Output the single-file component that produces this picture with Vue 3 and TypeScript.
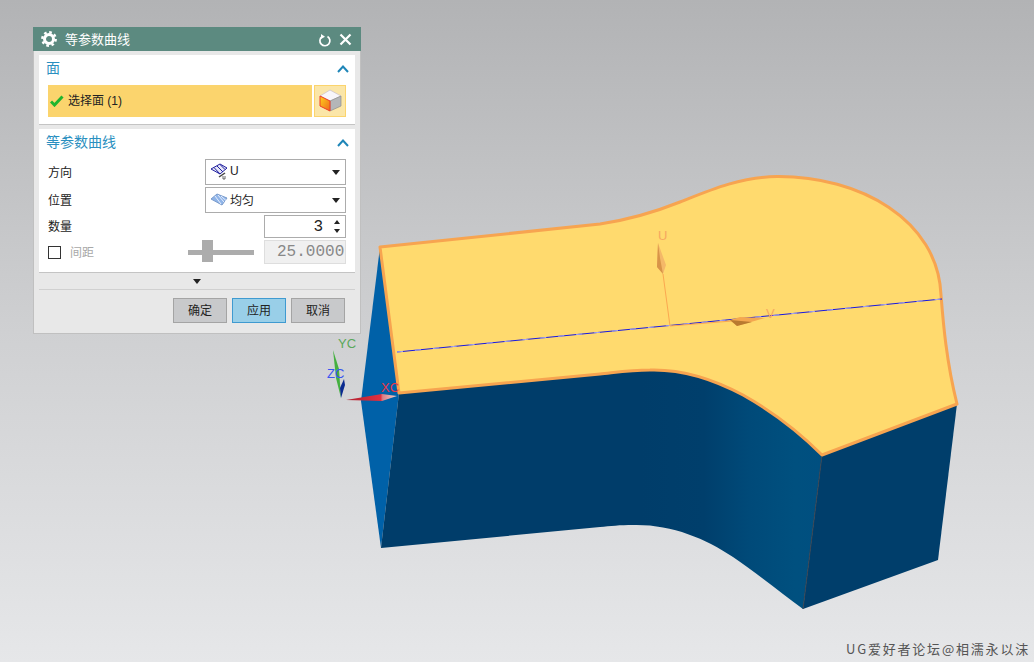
<script setup lang="ts">
interface DialogRow {
  label: string
  value: string
  icon: 'dir' | 'even'
}

const rows: DialogRow[] = [
  { label: '方向', value: 'U', icon: 'dir' },
  { label: '位置', value: '均匀', icon: 'even' },
]

const buttons = ['确定', '应用', '取消']

// outline of the top face, reused for the fill and the orange edge
const topFace =
  'M380 247 L600 224 C620 221 650 214 680 202 C710 190 740 177 777 176.500 C860 176 938 220 941 295 C943 320 946 360 957 404 L822 455 C800 433 775 413 743 395 C715 380 685 369 650 370 C630 370 615 372.500 600 374 L399 393 Z'
</script>

<template>
  <div class="viewport">
    <!-- 3D model on the graphics canvas -->
    <svg class="scene" width="1034" height="662" viewBox="0 0 1034 662">
      <defs>
        <linearGradient id="frontShade" x1="640" y1="0" x2="822" y2="0" gradientUnits="userSpaceOnUse">
          <stop offset="0" stop-color="#003d6a" />
          <stop offset="0.35" stop-color="#003f6c" />
          <stop offset="0.6" stop-color="#004a79" />
          <stop offset="0.85" stop-color="#00507f" />
          <stop offset="1" stop-color="#004f80" />
        </linearGradient>
        <linearGradient id="xArrow" x1="346" y1="0" x2="397" y2="0" gradientUnits="userSpaceOnUse">
          <stop offset="0" stop-color="#b02030" />
          <stop offset="0.68" stop-color="#e03040" />
          <stop offset="0.72" stop-color="#d88088" />
          <stop offset="1" stop-color="#f4d0c8" />
        </linearGradient>
      </defs>
      <path d="M380 247 L361 401 L381 548 L399 393 Z" fill="#0061a8" />
      <path
        d="M399 393 L600 374 C615 372.500 630 370 650 370 C685 369 715 380 743 395 C775 413 800 433 822 455 L803 609 C780 592 755 572 733 557 C705 538 670 524 633 525 C620 525 610 526 600 527 L381 548 Z"
        fill="url(#frontShade)"
      />
      <path d="M822 455 L957 404 L938 560 L803 609 Z" fill="#003e6b" />
      <path d="M822 455 L803 609" stroke="#3a4552" stroke-width="1" />
      <path :d="topFace" fill="#ffda6e" />
      <path :d="topFace" fill="none" stroke="#f7a450" stroke-width="3" stroke-linejoin="round" />
      <path d="M397 352 L942 299" stroke="#1818e0" stroke-width="1" fill="none" />
      <path d="M397 352 L942 299" stroke="#a8a8f0" stroke-width="1" stroke-dasharray="6 12" fill="none" />

      <!-- U / V handles -->
      <path d="M663 274 L670 326 L732 321" fill="none" stroke="#fba850" stroke-width="1" />
      <path d="M658 243 L666 265 L663 274 L657 267 Z" fill="#f4b868" />
      <path d="M658 243 L657 267 L663 274 L660 258 Z" fill="#d89448" />
      <path d="M730 320 L740 317 L765 318 L737 326 Z" fill="#f4a850" />
      <path d="M730 320 L737 326 L752 322 Z" fill="#b87a30" />
      <text x="658" y="240" class="axis axis-uv">U</text>
      <text x="766" y="318" class="axis axis-uv">V</text>

      <!-- WCS triad -->
      <path d="M333 350 L339 369 L341 398 L336 378 Z" fill="#44b040" />
      <path d="M341 398 L340 388 L344 379 L345 385 Z" fill="#0a2a90" />
      <path d="M346 400 L382 394 L397 396 L382 401 Z" fill="url(#xArrow)" />
      <text x="338" y="348" class="axis axis-y">YC</text>
      <text x="327" y="378" class="axis axis-z">ZC</text>
      <text x="381" y="392" class="axis axis-x">XC</text>
    </svg>

    <section class="dialog">
      <header class="titlebar">
        <svg class="gear" width="16" height="16" viewBox="0 0 16 16">
          <circle cx="8" cy="8" r="4.500" fill="none" stroke="#fff" stroke-width="3" />
          <circle cx="8" cy="8" r="6.700" fill="none" stroke="#fff" stroke-width="2.400" stroke-dasharray="2.630 2.630" />
        </svg>
        <span class="title">等参数曲线</span>
        <svg class="reset" width="14" height="14" viewBox="0 0 14 14">
          <path d="M9.500 2.500A5 5 0 1 1 4 2.700" fill="none" stroke="#fff" stroke-width="1.700" />
          <path d="M3 0l4 2.700-4 2.300z" fill="#fff" />
        </svg>
        <svg class="close" width="13" height="13" viewBox="0 0 13 13">
          <path d="M1.500 1.500l10 10M11.500 1.500l-10 10" stroke="#fff" stroke-width="2.200" />
        </svg>
      </header>

      <div class="content">
        <div class="group">
          <div class="group-head">
            <span>面</span>
            <svg class="chev" width="12" height="8" viewBox="0 0 12 8">
              <path d="M1 7l5-5.500L11 7" fill="none" stroke="#1f86b8" stroke-width="2" />
            </svg>
          </div>
          <div class="select-row">
            <div class="select-face">
              <svg width="14" height="12" viewBox="0 0 14 12">
                <path d="M1 6.500l3.500 3.500L12.500 1.500" fill="none" stroke="#1fb52e" stroke-width="3" />
              </svg>
              <span>选择面 (1)</span>
            </div>
            <div class="cube-btn">
              <svg width="24" height="24" viewBox="0 0 24 24">
                <defs>
                  <linearGradient id="cubeFace" x1="0" y1="0" x2="1" y2="1">
                    <stop offset="0" stop-color="#ffd21c" />
                    <stop offset="1" stop-color="#ee6a1c" />
                  </linearGradient>
                </defs>
                <path d="M2 7l10-6 11 6-11 5z" fill="#f8f6fa" stroke="#c8c0cc" stroke-width=".7" />
                <path d="M12 12l11-5v10l-11 5z" fill="#b4b6b8" stroke="#8c8c8c" stroke-width=".7" />
                <path d="M2 7l10 5v10L2 17z" fill="url(#cubeFace)" stroke="#f03c28" stroke-width="1" />
              </svg>
            </div>
          </div>
        </div>

        <div class="group group-params">
          <div class="group-head">
            <span>等参数曲线</span>
            <svg class="chev" width="12" height="8" viewBox="0 0 12 8">
              <path d="M1 7l5-5.500L11 7" fill="none" stroke="#1f86b8" stroke-width="2" />
            </svg>
          </div>

          <div v-for="row in rows" :key="row.label" class="param-row">
            <label>{{ row.label }}</label>
            <div class="dropdown">
              <svg v-if="row.icon === 'dir'" width="18" height="18" viewBox="0 0 18 18">
                <path d="M1 6l9-5 7 4-7 6z" fill="#e8e8f8" stroke="#2020a0" />
                <path d="M4 4.500l6 6.500M7 3l6 6M10 1.500l5 5" stroke="#2020a0" />
                <path d="M9 14l6-4" stroke="#444" stroke-width="1.500" />
                <path d="M13 13v3h2v-3" fill="none" stroke="#444" stroke-width=".8" />
              </svg>
              <svg v-else width="18" height="18" viewBox="0 0 18 18">
                <path d="M1 8l6-5 10 4-5 7z" fill="#8fb4e8" stroke="#7a9ccc" />
                <path d="M5 5l6 8M8 4l6 7M11 5l5 4.500" stroke="#e8f0ff" />
              </svg>
              <span class="dropdown-value">{{ row.value }}</span>
              <i class="caret" />
            </div>
          </div>

          <div class="param-row count-row">
            <label>数量</label>
            <div class="spinner">
              <span>3</span>
              <div class="spin-arrows"><i class="up" /><i class="down" /></div>
            </div>
          </div>

          <div class="param-row spacing-row">
            <span class="checkbox" />
            <label class="disabled">间距</label>
            <div class="slider"><i /></div>
            <div class="num-field">25.0000<i class="clipped" /></div>
          </div>
        </div>

        <div class="more"><i class="caret" /></div>

        <footer class="actions">
          <button
            v-for="b in buttons"
            :key="b"
            :class="{ active: b === '应用' }"
            type="button"
          >{{ b }}</button>
        </footer>
      </div>
    </section>

    <div class="watermark">UG爱好者论坛@相濡永以沫</div>
  </div>
</template>

<style>
html, body { margin: 0; overflow: hidden; }
</style>

<style scoped>
.viewport {
  position: relative;
  width: 1034px;
  height: 662px;
  overflow: hidden;
  background: linear-gradient(180deg, #b2b3b5 0%, #cfd0d2 50%, #e6e7e9 100%);
  font-family: "Noto Sans CJK SC", "Liberation Sans", sans-serif;
  font-size: 12px;
  color: #222;
}
.scene { position: absolute; left: 0; top: 0; }
.axis { font-family: "Liberation Sans", sans-serif; font-size: 13px; }
.axis-uv { fill: #f6a860; }
.axis-y { fill: #5aa85a; }
.axis-z { fill: #3a55f0; }
.axis-x { fill: #e8384a; }

.dialog {
  position: absolute;
  left: 33px;
  top: 27px;
  width: 328px;
  height: 307px;
  box-sizing: border-box;
  background: #e8e8e8;
  border: 1px solid #c0c0c0;
  border-top: 0;
  display: flex;
  flex-direction: column;
  font-family: "Liberation Sans", "Noto Sans CJK SC", sans-serif;
}
.titlebar {
  height: 24px;
  margin: 0 -1px;
  flex: none;
  background: #5c8a80;
  color: #fff;
  display: flex;
  align-items: center;
  padding: 0 9px 0 8px;
}
.title { margin-left: 8px; flex: 1; font-size: 13px; padding-bottom: 2px; }
.reset { margin-right: 7px; margin-top: 3px; }
.close { margin-top: 1px; }
.content {
  flex: 1;
  padding: 4px 5px 0;
  display: flex;
  flex-direction: column;
}
.group {
  background: #fff;
  border-bottom: 1px solid #c4c4c4;
  height: 69px;
  flex: none;
}
.group-params {
  margin-top: 4px;
  height: 143px;
}
.group-head {
  height: 27px;
  padding: 0 6px 0 7px;
  display: flex;
  align-items: center;
  justify-content: space-between;
  color: #2a8fc0;
  font-size: 14px;
}
.group-head span { padding-bottom: 3px; }
.group-params .group-head { margin-bottom: 2px; }
.select-row {
  display: flex;
  gap: 2px;
  margin: 3px 9px 0;
  height: 32px;
}
.select-face {
  flex: 1;
  background: #fbd46d;
  display: flex;
  align-items: center;
  gap: 4px;
  padding-left: 2px;
}
.select-face span { padding-bottom: 3px; }
.cube-btn {
  width: 32px;
  box-sizing: border-box;
  background: #fbe6a8;
  border: 1px solid #fbd46d;
  display: flex;
  align-items: center;
  justify-content: center;
}
.param-row {
  height: 28px;
  display: flex;
  align-items: center;
  justify-content: space-between;
  padding: 0 9px;
}
.param-row label { padding-bottom: 2px; }
.count-row { height: 25px; }
.dropdown {
  width: 141px;
  height: 26px;
  box-sizing: border-box;
  border: 1px solid #acacac;
  background: #fff;
  display: flex;
  align-items: center;
  padding: 0 5px 0 4px;
  gap: 2px;
}
.dropdown-value { flex: 1; padding-bottom: 2px; }
.caret {
  width: 0;
  height: 0;
  border-left: 4px solid transparent;
  border-right: 4px solid transparent;
  border-top: 5px solid #222;
}
.spinner {
  width: 82px;
  height: 23px;
  box-sizing: border-box;
  border: 1px solid #acacac;
  display: flex;
  align-items: center;
  justify-content: flex-end;
  padding-right: 5px;
  gap: 11px;
  font-family: "Liberation Mono", monospace;
  font-size: 16px;
}
.spin-arrows {
  display: flex;
  flex-direction: column;
  gap: 5px;
}
.spin-arrows i {
  width: 0;
  height: 0;
  border-left: 3px solid transparent;
  border-right: 3px solid transparent;
}
.spin-arrows .up { border-bottom: 4px solid #222; }
.spin-arrows .down { border-top: 4px solid #222; }
.spacing-row {
  justify-content: flex-start;
  height: 26px;
}
.checkbox {
  width: 11px;
  height: 11px;
  border: 1px solid #333;
  margin-right: 9px;
}
.disabled { color: #a8a8a8; }
.slider {
  position: relative;
  width: 66px;
  height: 5px;
  margin-left: 94px;
  margin-right: 10px;
  background: #acacac;
}
.slider i {
  position: absolute;
  left: 14px;
  top: -10px;
  width: 11px;
  height: 22px;
  background: #acacac;
}
.num-field {
  width: 82px;
  height: 24px;
  box-sizing: border-box;
  background: #f0f0f0;
  border: 1px solid #dedede;
  font-family: "Liberation Mono", monospace;
  font-size: 16px;
  color: #888;
  display: flex;
  align-items: center;
  white-space: nowrap;
  padding-left: 12px;
}
/* sliver of the next digit, cut off by the field edge */
.clipped {
  width: 1px;
  height: 7px;
  margin-left: 1px;
  background: #aaa;
}
.more {
  height: 16px;
  flex: none;
  display: flex;
  align-items: center;
  justify-content: center;
  border-bottom: 1px solid #d0d0d0;
}
.actions {
  display: flex;
  justify-content: flex-end;
  gap: 5px;
  padding: 8px 10px 0 0;
}
.actions button {
  width: 54px;
  height: 25px;
  padding: 0 0 2px;
  font: inherit;
  color: #222;
  background: #c8c9cb;
  border: 1px solid #a4a4a4;
}
.actions button.active {
  background: #99cfe8;
  border-color: #3f9ad0;
}
.watermark {
  position: absolute;
  right: 4px;
  bottom: 4px;
  font-size: 13px;
  letter-spacing: 1.800px;
  color: #555;
}
</style>
